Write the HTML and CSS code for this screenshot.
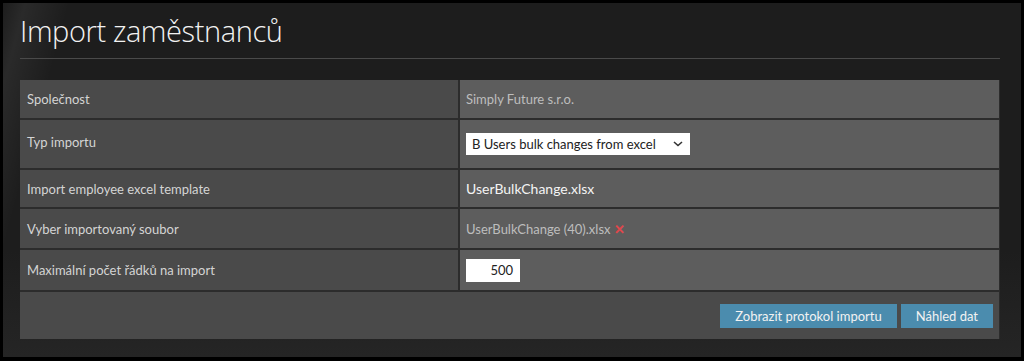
FILE: index.html
```html
<!DOCTYPE html>
<html lang="cs">
<head>
    <meta charset="UTF-8">
    <title>Import zaměstnanců</title>
    <link rel="stylesheet" href="styles.css">
</head>
<body>
    <div class="page">
        <h1 class="page-title">Import zaměstnanců</h1>
        <div class="title-rule"></div>
        <table class="import-table">
            <tr class="row-company">
                <td class="label">Společnost</td>
                <td class="value muted">Simply Future s.r.o.</td>
            </tr>
            <tr class="row-type">
                <td class="label">Typ importu</td>
                <td class="value">
                    <div class="select-box">
                        <span>B Users bulk changes from excel</span>
                        <svg class="chevron" width="10" height="6" viewBox="0 0 10 6"><path d="M1 1 L5 4.5 L9 1" fill="none" stroke="#333" stroke-width="1.6"/></svg>
                    </div>
                </td>
            </tr>
            <tr class="row-template">
                <td class="label">Import employee excel template</td>
                <td class="value link">UserBulkChange.xlsx</td>
            </tr>
            <tr class="row-file">
                <td class="label">Vyber importovaný soubor</td>
                <td class="value muted">UserBulkChange (40).xlsx<span class="remove">✕</span></td>
            </tr>
            <tr class="row-limit">
                <td class="label">Maximální počet řádků na import</td>
                <td class="value"><div class="number-box">500</div></td>
            </tr>
        </table>
        <div class="form-actions">
            <button class="btn">Zobrazit protokol importu</button>
            <button class="btn">Náhled dat</button>
        </div>
    </div>
</body>
</html>
```

FILE: styles.css
```css
html, body {
    margin: 0;
    padding: 0;
    background: #000;
}

body {
    font-family: 'Lato', 'Open Sans', sans-serif;
}

.page {
    box-sizing: border-box;
    width: 1024px;
    height: 361px;
    border: 3px solid #000;
    border-bottom-width: 4px;
    padding: 0 21px 0 17px;
    background:
        linear-gradient(105deg, rgba(255,255,255,0) 0%, rgba(255,255,255,0.06) 2%, rgba(255,255,255,0) 6%),
        linear-gradient(180deg, #1d1d1d 0%, #1d1d1d 70%, #252525 100%);
}

.page-title {
    margin: 0;
    padding-top: 10px;
    height: 45px;
    font-family: 'Open Sans', sans-serif;
    font-size: 29px;
    font-weight: 300;
    line-height: 36px;
    color: #f2f2f2;
    letter-spacing: -0.4px;
}

.title-rule {
    height: 1px;
    background: #4a4a4a;
    margin-bottom: 21px;
}

.import-table {
    width: 100%;
    border-collapse: collapse;
    font-size: 13px;
}

.import-table td {
    border-bottom: 2px solid #2c2c2c;
    padding: 0 0 0 7px;
}

.import-table .label {
    width: 431px;
    background: #4a4a4a;
    color: #d4d4d4;
}

.import-table .value {
    background: #5d5d5d;
    border-left: 2px solid #2c2c2c;
    border-right: 1px solid #2c2c2c;
    padding-left: 6px;
}

.row-company td { height: 38px; }
.row-type td { height: 43px; }
.row-template td { height: 37px; }
.row-file td { height: 39px; }
.row-limit td { height: 40px; }

.row-type .label {
    padding-bottom: 5px;
}

.value.muted {
    color: #bdbdbd;
}

.value.link {
    color: #f4f4f4;
    font-size: 14px;
}

.remove {
    color: #e0474c;
    font-size: 13px;
    font-weight: 700;
    margin-left: 3px;
}

.select-box {
    display: flex;
    align-items: center;
    justify-content: space-between;
    box-sizing: border-box;
    width: 224px;
    height: 22px;
    background: #fff;
    padding: 0 7px 0 6px;
    color: #222;
    font-size: 13px;
}

.number-box {
    box-sizing: border-box;
    width: 54px;
    height: 23px;
    background: #fff;
    color: #222;
    text-align: right;
    padding: 3px 7px 0 0;
    font-size: 13px;
}

.form-actions {
    display: flex;
    justify-content: flex-end;
    gap: 4px;
    height: 47px;
    box-sizing: border-box;
    padding: 12px 6px 0 0;
    background: #4a4a4a;
    border-right: 1px solid #2c2c2c;
}

.btn {
    height: 24px;
    padding: 0 15px;
    border: none;
    background: #4b8cae;
    color: #f2f2f2;
    font-family: 'Lato', 'Open Sans', sans-serif;
    font-size: 13px;
}
```
